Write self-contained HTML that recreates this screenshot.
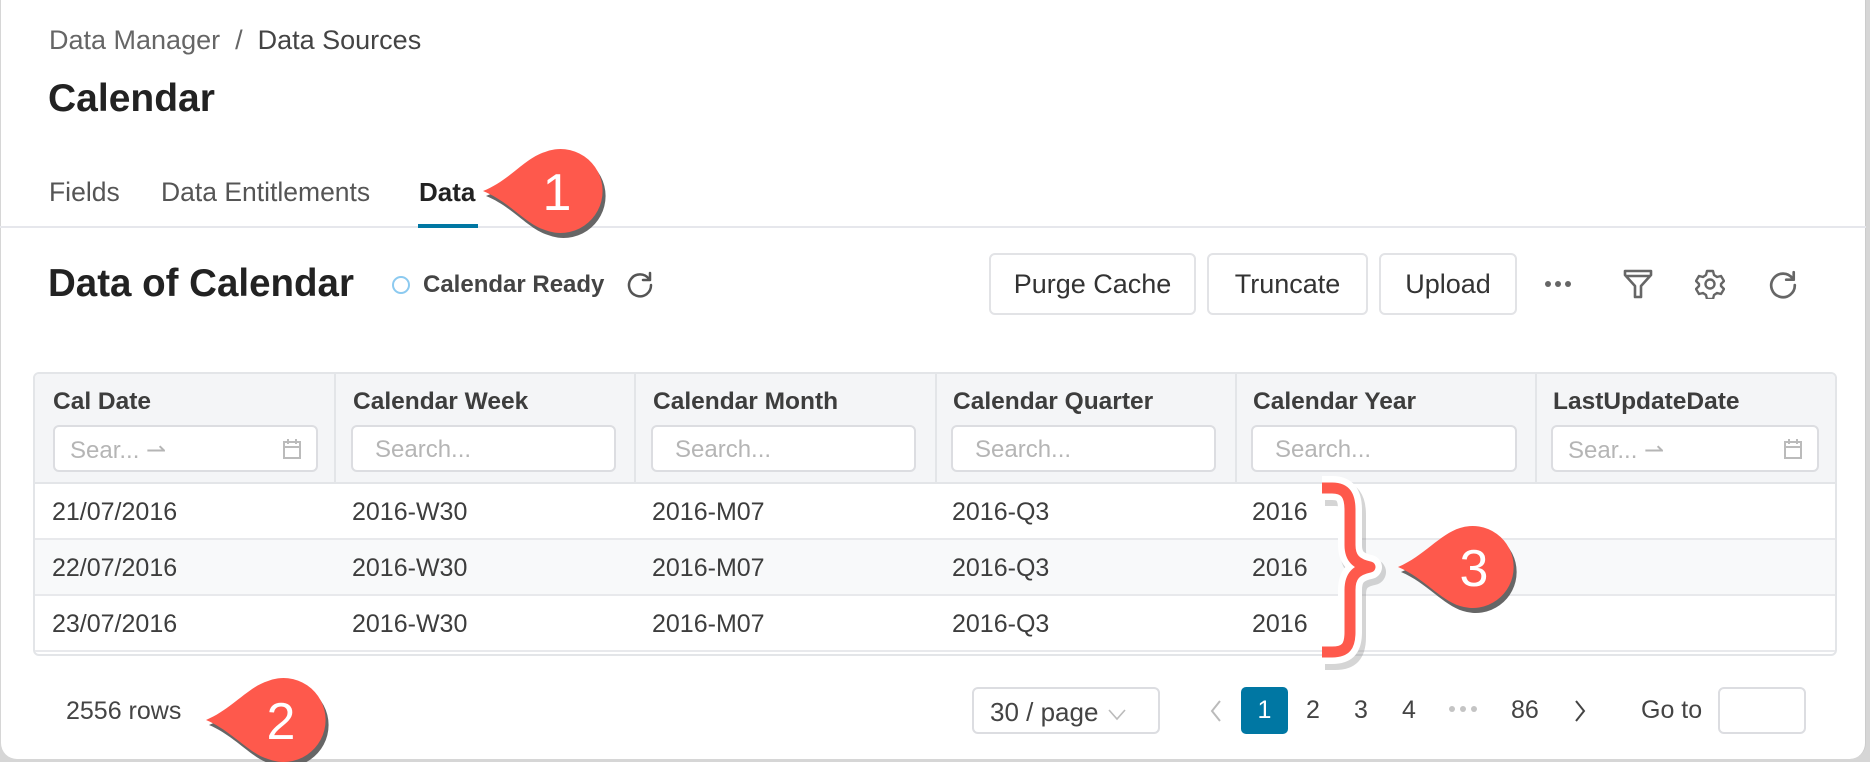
<!DOCTYPE html>
<html><head><meta charset="utf-8"><style>
*{box-sizing:border-box;margin:0;padding:0}
html,body{width:1870px;height:762px;overflow:hidden;background:#d6d6d6;font-family:"Liberation Sans",sans-serif;color:#333}
.card{position:absolute;left:1px;top:-20px;width:1865px;height:779px;background:#fff;border-radius:16px;border-right:1px solid #ccc}
.a{position:absolute;white-space:nowrap}
.btn{position:absolute;top:253px;height:62px;border:2px solid #e2e3e6;border-radius:6px;font-size:27px;color:#333;display:flex;align-items:center;justify-content:center}
.tbl{position:absolute;left:33px;top:372px;width:1804px;height:284px;border:2px solid #e3e5e8;border-radius:6px;overflow:hidden}
.hd{position:absolute;left:0;top:0;width:100%;height:110px;background:#f4f5f7;border-bottom:2px solid #e3e5e8}
.vl{position:absolute;top:0;height:110px;width:2px;background:#e3e5e8}
.ht{position:absolute;top:14px;font-size:24.5px;font-weight:bold;color:#3d3d3d}
.in{position:absolute;top:51px;height:47px;border:2px solid #dcdde1;border-radius:6px;background:#fff;font-size:24px;color:#b5b5b5;padding:9px 0 0 22px}
.row{position:absolute;left:0;width:100%;height:56px;border-bottom:2px solid #e8e9ec}
.c{position:absolute;top:14px;font-size:25px;color:#3d3d3d}
.pg{position:absolute;top:696px;font-size:25px;color:#444}
</style></head><body>
<div class="card"></div>
<div class="a" style="left:49px;top:25px;font-size:27px;color:#666">Data Manager&nbsp;&nbsp;/&nbsp;&nbsp;<span style="color:#444">Data Sources</span></div>
<div class="a" style="left:48px;top:77px;font-size:39px;font-weight:bold;color:#222">Calendar</div>
<div class="a" style="left:49px;top:177px;font-size:26.5px;color:#555">Fields</div>
<div class="a" style="left:161px;top:177px;font-size:26.5px;color:#555">Data Entitlements</div>
<div class="a" style="left:419px;top:177px;font-size:26px;font-weight:bold;color:#222">Data</div>
<div class="a" style="left:0;top:226px;width:1866px;height:2px;background:#e6e7ec"></div>
<div class="a" style="left:418px;top:224px;width:60px;height:4px;background:#0077a3"></div>
<div class="a" style="left:48px;top:262px;font-size:38.5px;font-weight:bold;color:#222">Data of Calendar</div>
<div class="a" style="left:392px;top:276px;width:18px;height:18px;border:2px solid #8ccaf0;border-radius:50%"></div>
<div class="a" style="left:423px;top:271px;font-size:24px;font-weight:bold;color:#444">Calendar Ready</div>
<svg class="a" style="left:626px;top:270px" width="28" height="28" viewBox="0 0 28 28"><path d="M23 9A11 11 0 1 0 25 15" fill="none" stroke="#555" stroke-width="2.5" stroke-linecap="round"/><path d="M24 3v7h-7" fill="none" stroke="#555" stroke-width="2.5" stroke-linecap="round" stroke-linejoin="round"/></svg>
<div class="btn" style="left:989px;width:207px">Purge Cache</div>
<div class="btn" style="left:1207px;width:161px">Truncate</div>
<div class="btn" style="left:1379px;width:138px">Upload</div>
<svg class="a" style="left:1544px;top:278px" width="28" height="12"><circle cx="4" cy="6" r="3" fill="#666"/><circle cx="14" cy="6" r="3" fill="#666"/><circle cx="24" cy="6" r="3" fill="#666"/></svg>
<svg class="a" style="left:1622px;top:268px" width="32" height="32" viewBox="0 0 32 32"><path d="M3 3h26v4L19 18v11h-6V18L3 7z M4 8h24" fill="none" stroke="#666" stroke-width="2.6" stroke-linejoin="round"/></svg>
<svg class="a" style="left:1695px;top:269px" width="30" height="30" viewBox="0 0 30 30"><path d="M12 2h6l1 4 3 2 4-1 3 5-3 3v2l3 3-3 5-4-1-3 2-1 4h-6l-1-4-3-2-4 1-3-5 3-3v-2L1 12l3-5 4 1 3-2z" fill="none" stroke="#666" stroke-width="2.4" stroke-linejoin="round"/><circle cx="15" cy="15" r="4.5" fill="none" stroke="#666" stroke-width="2.4"/></svg>
<svg class="a" style="left:1768px;top:269px" width="30" height="30" viewBox="0 0 28 28"><path d="M23 9A11 11 0 1 0 25 15" fill="none" stroke="#666" stroke-width="2.5" stroke-linecap="round"/><path d="M24 3v7h-7" fill="none" stroke="#666" stroke-width="2.5" stroke-linecap="round" stroke-linejoin="round"/></svg>

<div class="tbl">
<div class="hd"></div>
<div class="vl" style="left:299px"></div><div class="vl" style="left:599px"></div><div class="vl" style="left:900px"></div><div class="vl" style="left:1200px"></div><div class="vl" style="left:1500px"></div>
<div class="ht" style="left:18px">Cal Date</div>
<div class="ht" style="left:318px">Calendar Week</div>
<div class="ht" style="left:618px">Calendar Month</div>
<div class="ht" style="left:918px">Calendar Quarter</div>
<div class="ht" style="left:1218px">Calendar Year</div>
<div class="ht" style="left:1518px">LastUpdateDate</div>
<div class="in" style="left:18px;width:265px;padding-left:15px">Sear... ⇀<svg style="position:absolute;right:14px;top:11px" width="20" height="22"><rect x="2" y="4" width="16" height="16" fill="none" stroke="#bbb" stroke-width="2"/><path d="M2 9h16M6 1v5M14 1v5" stroke="#bbb" stroke-width="2"/></svg></div>
<div class="in" style="left:316px;width:265px">Search...</div>
<div class="in" style="left:616px;width:265px">Search...</div>
<div class="in" style="left:916px;width:265px">Search...</div>
<div class="in" style="left:1216px;width:266px">Search...</div>
<div class="in" style="left:1516px;width:268px;padding-left:15px">Sear... ⇀<svg style="position:absolute;right:14px;top:11px" width="20" height="22"><rect x="2" y="4" width="16" height="16" fill="none" stroke="#bbb" stroke-width="2"/><path d="M2 9h16M6 1v5M14 1v5" stroke="#bbb" stroke-width="2"/></svg></div>
<div class="row" style="top:110px"><div class="c" style="left:17px">21/07/2016</div><div class="c" style="left:317px">2016-W30</div><div class="c" style="left:617px">2016-M07</div><div class="c" style="left:917px">2016-Q3</div><div class="c" style="left:1217px">2016</div></div>
<div class="row" style="top:166px;background:#f8f9fa"><div class="c" style="left:17px">22/07/2016</div><div class="c" style="left:317px">2016-W30</div><div class="c" style="left:617px">2016-M07</div><div class="c" style="left:917px">2016-Q3</div><div class="c" style="left:1217px">2016</div></div>
<div class="row" style="top:222px"><div class="c" style="left:17px">23/07/2016</div><div class="c" style="left:317px">2016-W30</div><div class="c" style="left:617px">2016-M07</div><div class="c" style="left:917px">2016-Q3</div><div class="c" style="left:1217px">2016</div></div>
</div>

<div class="a" style="left:66px;top:697px;font-size:25px;color:#444">2556 rows</div>
<div class="a" style="left:972px;top:687px;width:188px;height:47px;border:2px solid #dcdde1;border-radius:6px;font-size:26px;color:#444;padding:8px 0 0 16px">30 / page <svg width="18" height="12" style="margin-left:2px"><path d="M1 1l8 9 8-9" fill="none" stroke="#bbb" stroke-width="1.6"/></svg></div>
<svg class="a" style="left:1209px;top:699px" width="14" height="24"><path d="M11 2L3 12l8 10" fill="none" stroke="#bbb" stroke-width="2"/></svg>
<div class="a" style="left:1241px;top:687px;width:47px;height:47px;background:#0077a3;border-radius:5px;color:#fff;font-size:25px;text-align:center;line-height:47px">1</div>
<div class="pg" style="left:1306px">2</div>
<div class="pg" style="left:1354px">3</div>
<div class="pg" style="left:1402px">4</div>
<svg class="a" style="left:1448px;top:704px" width="32" height="10"><circle cx="4" cy="5" r="3" fill="#c4c4c4"/><circle cx="15" cy="5" r="3" fill="#c4c4c4"/><circle cx="26" cy="5" r="3" fill="#c4c4c4"/></svg>
<div class="pg" style="left:1511px">86</div>
<svg class="a" style="left:1573px;top:699px" width="14" height="24"><path d="M3 2l8 10-8 10" fill="none" stroke="#444" stroke-width="2"/></svg>
<div class="pg" style="left:1641px">Go to</div>
<div class="a" style="left:1718px;top:687px;width:88px;height:47px;border:2px solid #dcdde1;border-radius:6px"></div>

<svg class="a" style="left:0;top:0" width="1870" height="762">
<defs>
<path id="b1" d="M483 191 C510 180 525 158 545 152 A42 42 0 1 1 545 230 C525 224 510 202 483 191Z"/>
<path id="b2" d="M206 720 C232 709 248 687 268 681 A42 42 0 1 1 268 759 C248 753 232 731 206 720Z"/>
<path id="b3" d="M1398 567 C1424 556 1440 534 1460 528 A41 41 0 1 1 1460 606 C1440 600 1424 578 1398 567Z"/>
<path id="br" d="M1322 488 H1332 C1346 488 1350 496 1350 510 V545 C1350 558 1356 564 1370 567 C1356 570 1350 576 1350 590 V632 C1350 646 1346 652 1332 652 H1322"/>
</defs>
<g fill="#666" transform="translate(3,5)"><use href="#b1"/><use href="#b2"/><use href="#b3"/></g>
<g fill="#fe594c"><use href="#b1"/><use href="#b2"/><use href="#b3"/></g>
<use href="#br" fill="none" stroke="#888" stroke-width="26" opacity=".35" transform="translate(3,5)" stroke-linejoin="round"/>
<use href="#br" fill="none" stroke="#fff" stroke-width="24" stroke-linejoin="round"/>
<use href="#br" fill="none" stroke="#fe594c" stroke-width="11" stroke-linejoin="round"/>
<g fill="#fff" font-family="Liberation Sans,sans-serif" font-size="52" text-anchor="middle">
<text x="557" y="210">1</text><text x="281" y="739">2</text><text x="1474" y="586">3</text>
</g>
</svg>
</body></html>
